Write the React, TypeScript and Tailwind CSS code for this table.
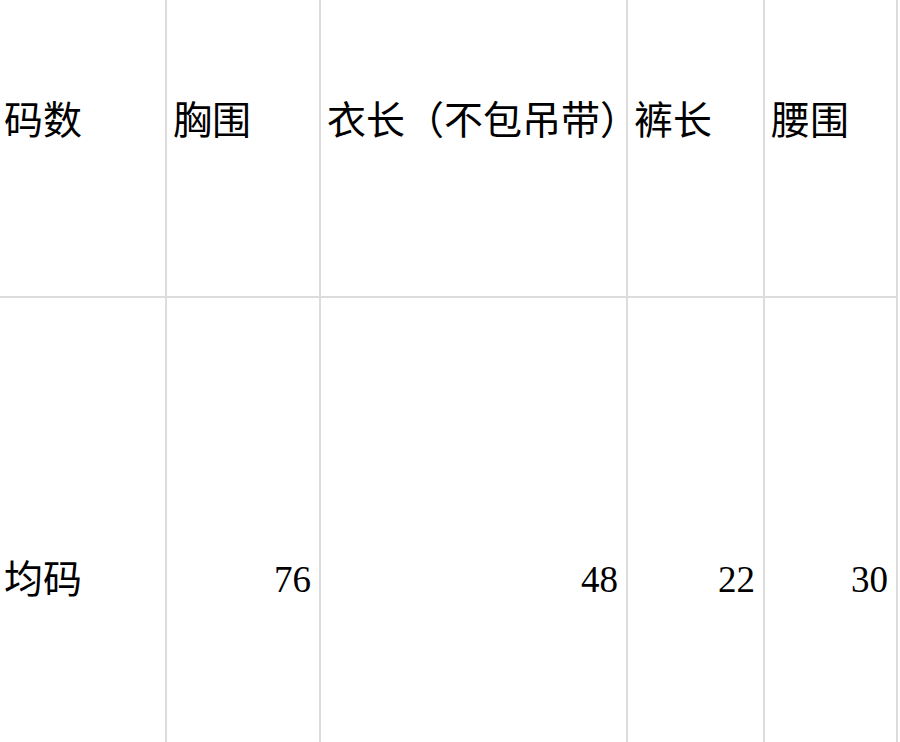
const headers = ["码数", "胸围", "衣长（不包吊带）", "裤长", "腰围"];
const values = ["均码", "76", "48", "22", "30"];

const widths = ["w-[167px]", "w-[154px]", "w-[307px]", "w-[137px]", "w-[133px]"];

export default function App() {
  return (
    <div
      className="w-[900px] h-[742px] overflow-hidden bg-white text-black"
      style={{ fontFamily: '"Liberation Serif", "Noto Sans CJK SC", serif' }}
    >
      <div className="flex h-[298px]">
        {headers.map((h, i) => (
          <div
            key={h}
            className={`${widths[i]} shrink-0 h-full border-r-2 border-b-2 border-[#dcdcdc] pt-[101px] text-[39px] leading-[39px] whitespace-nowrap ${
              i === 0 ? "pl-[4px]" : "pl-[6px]"
            }`}
          >
            {h}
          </div>
        ))}
      </div>
      <div className="flex h-[444px]">
        {values.map((v, i) => (
          <div
            key={v}
            className={`${widths[i]} shrink-0 h-full border-r-2 border-[#dcdcdc] whitespace-nowrap ${
              i === 0
                ? "pl-[4px] pt-[262px] text-[39px] leading-[39px] text-left"
                : "pr-[8px] pt-[263px] text-[37px] leading-[37px] text-right"
            }`}
          >
            {v}
          </div>
        ))}
      </div>
    </div>
  );
}
